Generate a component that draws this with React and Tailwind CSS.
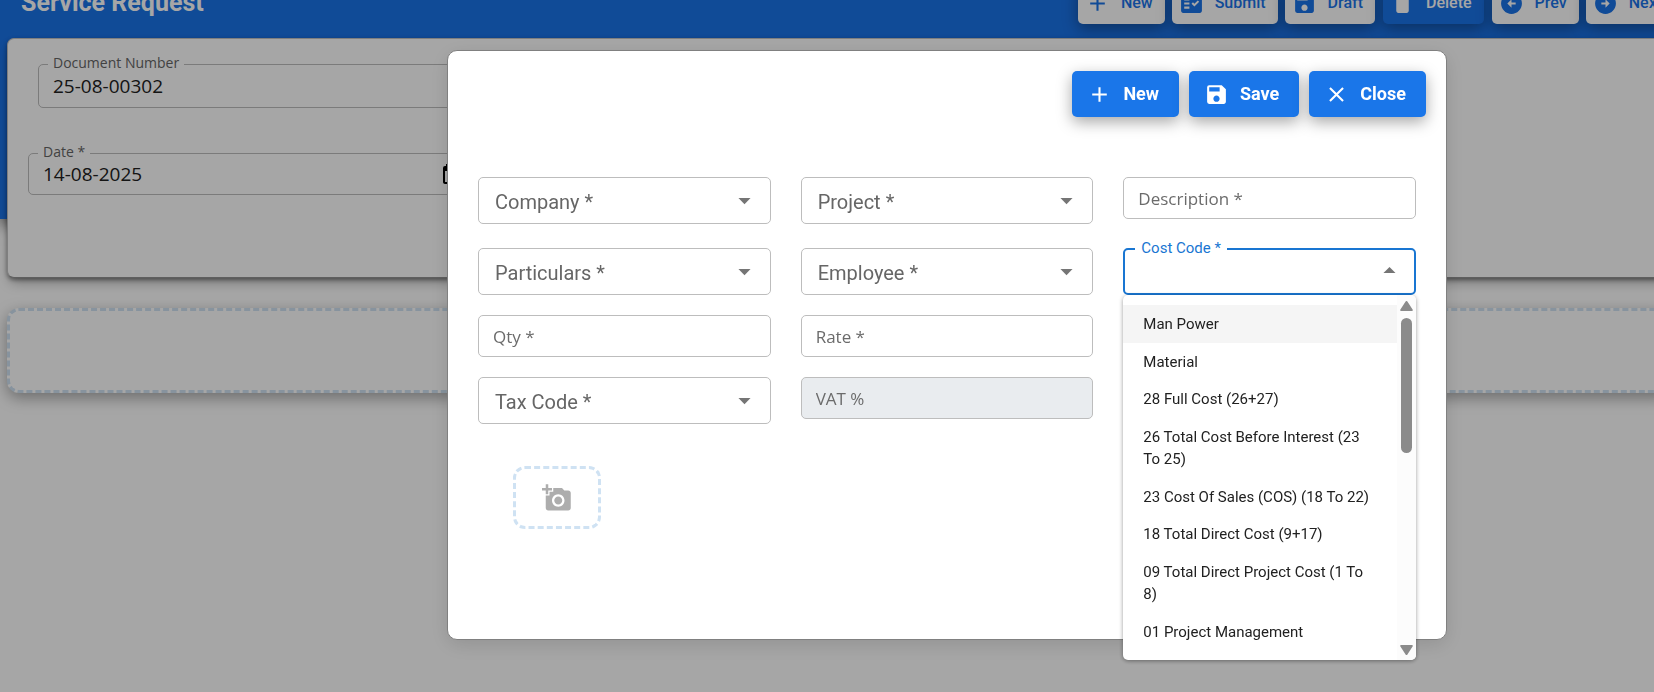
import { useState } from "react"
import { clsx } from "clsx"
import {
  MdAdd,
  MdAddAPhoto,
  MdArrowCircleLeft,
  MdArrowCircleRight,
  MdArrowDropDown,
  MdArrowDropUp,
  MdClose,
  MdDelete,
  MdFactCheck,
  MdSave,
} from "react-icons/md"

const toolbar = [
  { label: "New", icon: MdAdd },
  { label: "Submit", icon: MdFactCheck },
  { label: "Draft", icon: MdSave },
  { label: "Delete", icon: MdDelete, solid: true },
  { label: "Prev", icon: MdArrowCircleLeft },
  { label: "Next", icon: MdArrowCircleRight },
]

const costCodes = [
  "Man Power",
  "Material",
  "28 Full Cost (26+27)",
  "26 Total Cost Before Interest (23 To 25)",
  "23 Cost Of Sales (COS) (18 To 22)",
  "18 Total Direct Cost (9+17)",
  "09 Total Direct Project Cost (1 To 8)",
  "01 Project Management",
]

const ToolbarButton = ({ label, icon: Icon, solid }) => (
  <button
    type="button"
    className={clsx(
      "flex h-[42px] shrink-0 items-center gap-[11px] rounded-[5px] pl-[7px] pr-3 text-base font-medium shadow-[0_5px_15px_rgba(0,0,0,0.35)]",
      solid ? "mx-px bg-[#1a73e8] text-white" : "bg-white text-[#1a73e8]"
    )}
  >
    <Icon className="size-[25px]" />
    {label}
  </button>
)

const ModalButton = ({ label, icon: Icon }) => (
  <button
    type="button"
    className="flex h-[46px] items-center gap-[11px] rounded-[5px] bg-[#1a76e9] pl-[15px] pr-5 text-lg font-bold text-white shadow-[0_5px_15px_rgba(0,0,0,0.35)]"
  >
    <Icon className="size-[25px]" />
    {label}
  </button>
)

// outlined field of the page behind the dialog, label sits on the border
const PageField = ({ id, label, value, className, children }) => (
  <div className={clsx("relative flex items-center rounded-[5px] border border-[#bdbdbd]", className)}>
    <label
      htmlFor={id}
      className="absolute -top-[14px] left-[9px] bg-white px-[5px] text-sm leading-6 text-[#666]"
    >
      {label}
    </label>
    <input
      id={id}
      defaultValue={value}
      className="h-full w-full min-w-0 bg-transparent px-[14px] text-[19px] text-[#212121] outline-none"
    />
    {children}
  </div>
)

const TextField = ({ id, label, disabled }) => (
  <input
    id={id}
    aria-label={label}
    placeholder={label}
    disabled={disabled}
    className={clsx(
      "h-[42px] w-full rounded-[5px] border border-[#bdbdbd] px-[14px] font-['Open_Sans',sans-serif] text-[17px] text-[#666] placeholder:text-[#6b6b6b] outline-none",
      disabled ? "bg-[#e9ecef]" : "bg-white"
    )}
  />
)

const SelectField = ({ id, label }) => (
  <div className="relative">
    <label
      htmlFor={id}
      className="pointer-events-none absolute inset-y-0 left-[17px] flex items-center pt-[3px] text-xl text-[#666]"
    >
      {label}
    </label>
    <select
      id={id}
      defaultValue=""
      className="block h-[47px] w-full appearance-none rounded-[5px] border border-[#bdbdbd] bg-transparent outline-none"
    >
      <option value="" />
    </select>
    <MdArrowDropDown className="pointer-events-none absolute right-3 top-[9px] size-[29px] text-[#757575]" />
  </div>
)

const CostCodeField = () => {
  const [active, setActive] = useState(0)

  return (
    <div className="relative">
      <label
        htmlFor="costCode"
        className="absolute -top-3 left-3 bg-white px-[6px] text-[15px] leading-6 text-[#1976d2]"
      >
        Cost Code *
      </label>
      <select
        id="costCode"
        defaultValue=""
        className="block h-[47px] w-full appearance-none rounded-[5px] border-2 border-[#1976d2] bg-transparent outline-none"
      >
        <option value="" />
      </select>
      <MdArrowDropUp className="pointer-events-none absolute right-3 top-2 size-[29px] text-[#757575]" />

      <div className="absolute inset-x-0 top-full z-10 flex overflow-hidden rounded-[5px] bg-white shadow-[0_1px_4px_rgba(0,0,0,0.4)]">
        <ul role="listbox" aria-label="Cost Code" className="flex-1 py-[10px]">
          {costCodes.map((code, i) => (
            <li
              key={code}
              role="option"
              aria-selected={i === active}
              onMouseEnter={() => setActive(i)}
              className={clsx(
                "px-5 pb-[7px] pt-2 text-[15px] leading-normal text-[#212121]",
                i === active && "bg-[#f5f5f5]"
              )}
            >
              {code}
            </li>
          ))}
        </ul>
        <div className="flex w-[19px] flex-col items-center bg-[#fcfcfc] pb-[5px] pt-[6px]">
          <svg viewBox="0 0 13 10" className="h-[10px] w-[13px] fill-[#8b8b8b]">
            <path d="M5.6.6a1.1 1.1 0 0 1 1.8 0l5.2 7.8c.5.7 0 1.6-.8 1.6H1.2C.4 10-.1 9.1.4 8.4z" />
          </svg>
          <div className="mt-[7px] h-[135px] w-[11px] rounded-full bg-[#8b8b8b]" />
          <svg viewBox="0 0 13 10" className="mt-auto h-[10px] w-[13px] fill-[#8b8b8b]">
            <path d="M5.6 9.4a1.1 1.1 0 0 0 1.8 0l5.2-7.8c.5-.7 0-1.6-.8-1.6H1.2C.4 0-.1.9.4 1.6z" />
          </svg>
        </div>
      </div>
    </div>
  )
}

const ItemModal = () => (
  <div className="fixed inset-0 flex items-start justify-center bg-black/35 pl-60 pt-[50px]">
    <div
      role="dialog"
      aria-label="Service request item"
      className="flex min-h-[590px] w-[1000px] flex-col rounded-[10px] border border-[#808080] bg-white shadow-[0_5px_20px_rgba(0,0,0,0.12)]"
    >
      <div className="flex justify-end gap-[10px] px-5 pt-5">
        <ModalButton label="New" icon={MdAdd} />
        <ModalButton label="Save" icon={MdSave} />
        <ModalButton label="Close" icon={MdClose} />
      </div>

      <form className="px-[30px] pt-[60px]">
        <div className="mb-6 grid grid-cols-3 items-start gap-x-[30px]">
          <SelectField id="company" label="Company *" />
          <SelectField id="project" label="Project *" />
          <TextField id="description" label="Description *" />
        </div>
        <div className="grid grid-cols-3 items-start gap-x-[30px] gap-y-5">
          <SelectField id="particulars" label="Particulars *" />
          <SelectField id="employee" label="Employee *" />
          <CostCodeField />
          <TextField id="qty" label="Qty *" />
          <TextField id="rate" label="Rate *" />
          <div />
          <SelectField id="taxCode" label="Tax Code *" />
          <TextField id="vat" label="VAT %" disabled />
        </div>
        <button
          type="button"
          aria-label="Add photo"
          className="ml-[35px] mt-[42px] flex h-[63px] w-[88px] items-center justify-center rounded-xl border-3 border-dashed border-[#cfe2f3] text-[#adadad]"
        >
          <MdAddAPhoto className="size-[30px]" />
        </button>
      </form>
    </div>
  </div>
)

const App = () => {
  return (
    <div className="min-h-screen overflow-hidden bg-white font-[Roboto,sans-serif]">
      <header className="flow-root h-[219px] bg-[#1a73e8] shadow-[0_5px_15px_rgba(0,0,0,0.6)]">
        <div className="-mr-5 -mt-[18px] flex items-center justify-between pl-[21px]">
          <h1 className="text-[25px] font-bold text-white">Service Request</h1>
          <div className="flex gap-[7px]">
            {toolbar.map((item) => (
              <ToolbarButton key={item.label} {...item} />
            ))}
          </div>
        </div>
      </header>

      <main className="relative -mr-4 -mt-[181px] ml-[7px] font-['Open_Sans',sans-serif]">
        <section className="h-[240px] rounded-[7px] border border-b-[#929292] border-[#c3c3c3] bg-white pl-5 pt-[25px] shadow-[0_2px_4px_rgba(0,0,0,0.4),0_7px_13px_-3px_rgba(0,0,0,0.3)]">
          <PageField
            id="documentNumber"
            label="Document Number"
            value="25-08-00302"
            className="ml-[10px] h-11 w-[450px]"
          />
          <PageField
            id="date"
            label="Date *"
            value="14-08-2025"
            className="mt-[45px] h-[42px] w-[450px]"
          >
            <svg viewBox="0 0 18 20" className="mr-4 h-5 w-[18px] shrink-0 fill-black">
              <path d="M16 2h-1V0h-2v2H5V0H3v2H2a2 2 0 0 0-2 2v14c0 1.1.9 2 2 2h14a2 2 0 0 0 2-2V4a2 2 0 0 0-2-2zm0 16H2V7h14z" />
            </svg>
          </PageField>
        </section>
        <section className="mt-[30px] h-[85px] rounded-xl border-3 border-dashed border-[#cfe2f3] bg-white shadow-[0_5px_15px_rgba(0,0,0,0.35)]" />
      </main>

      <ItemModal />
    </div>
  )
}

export default App
